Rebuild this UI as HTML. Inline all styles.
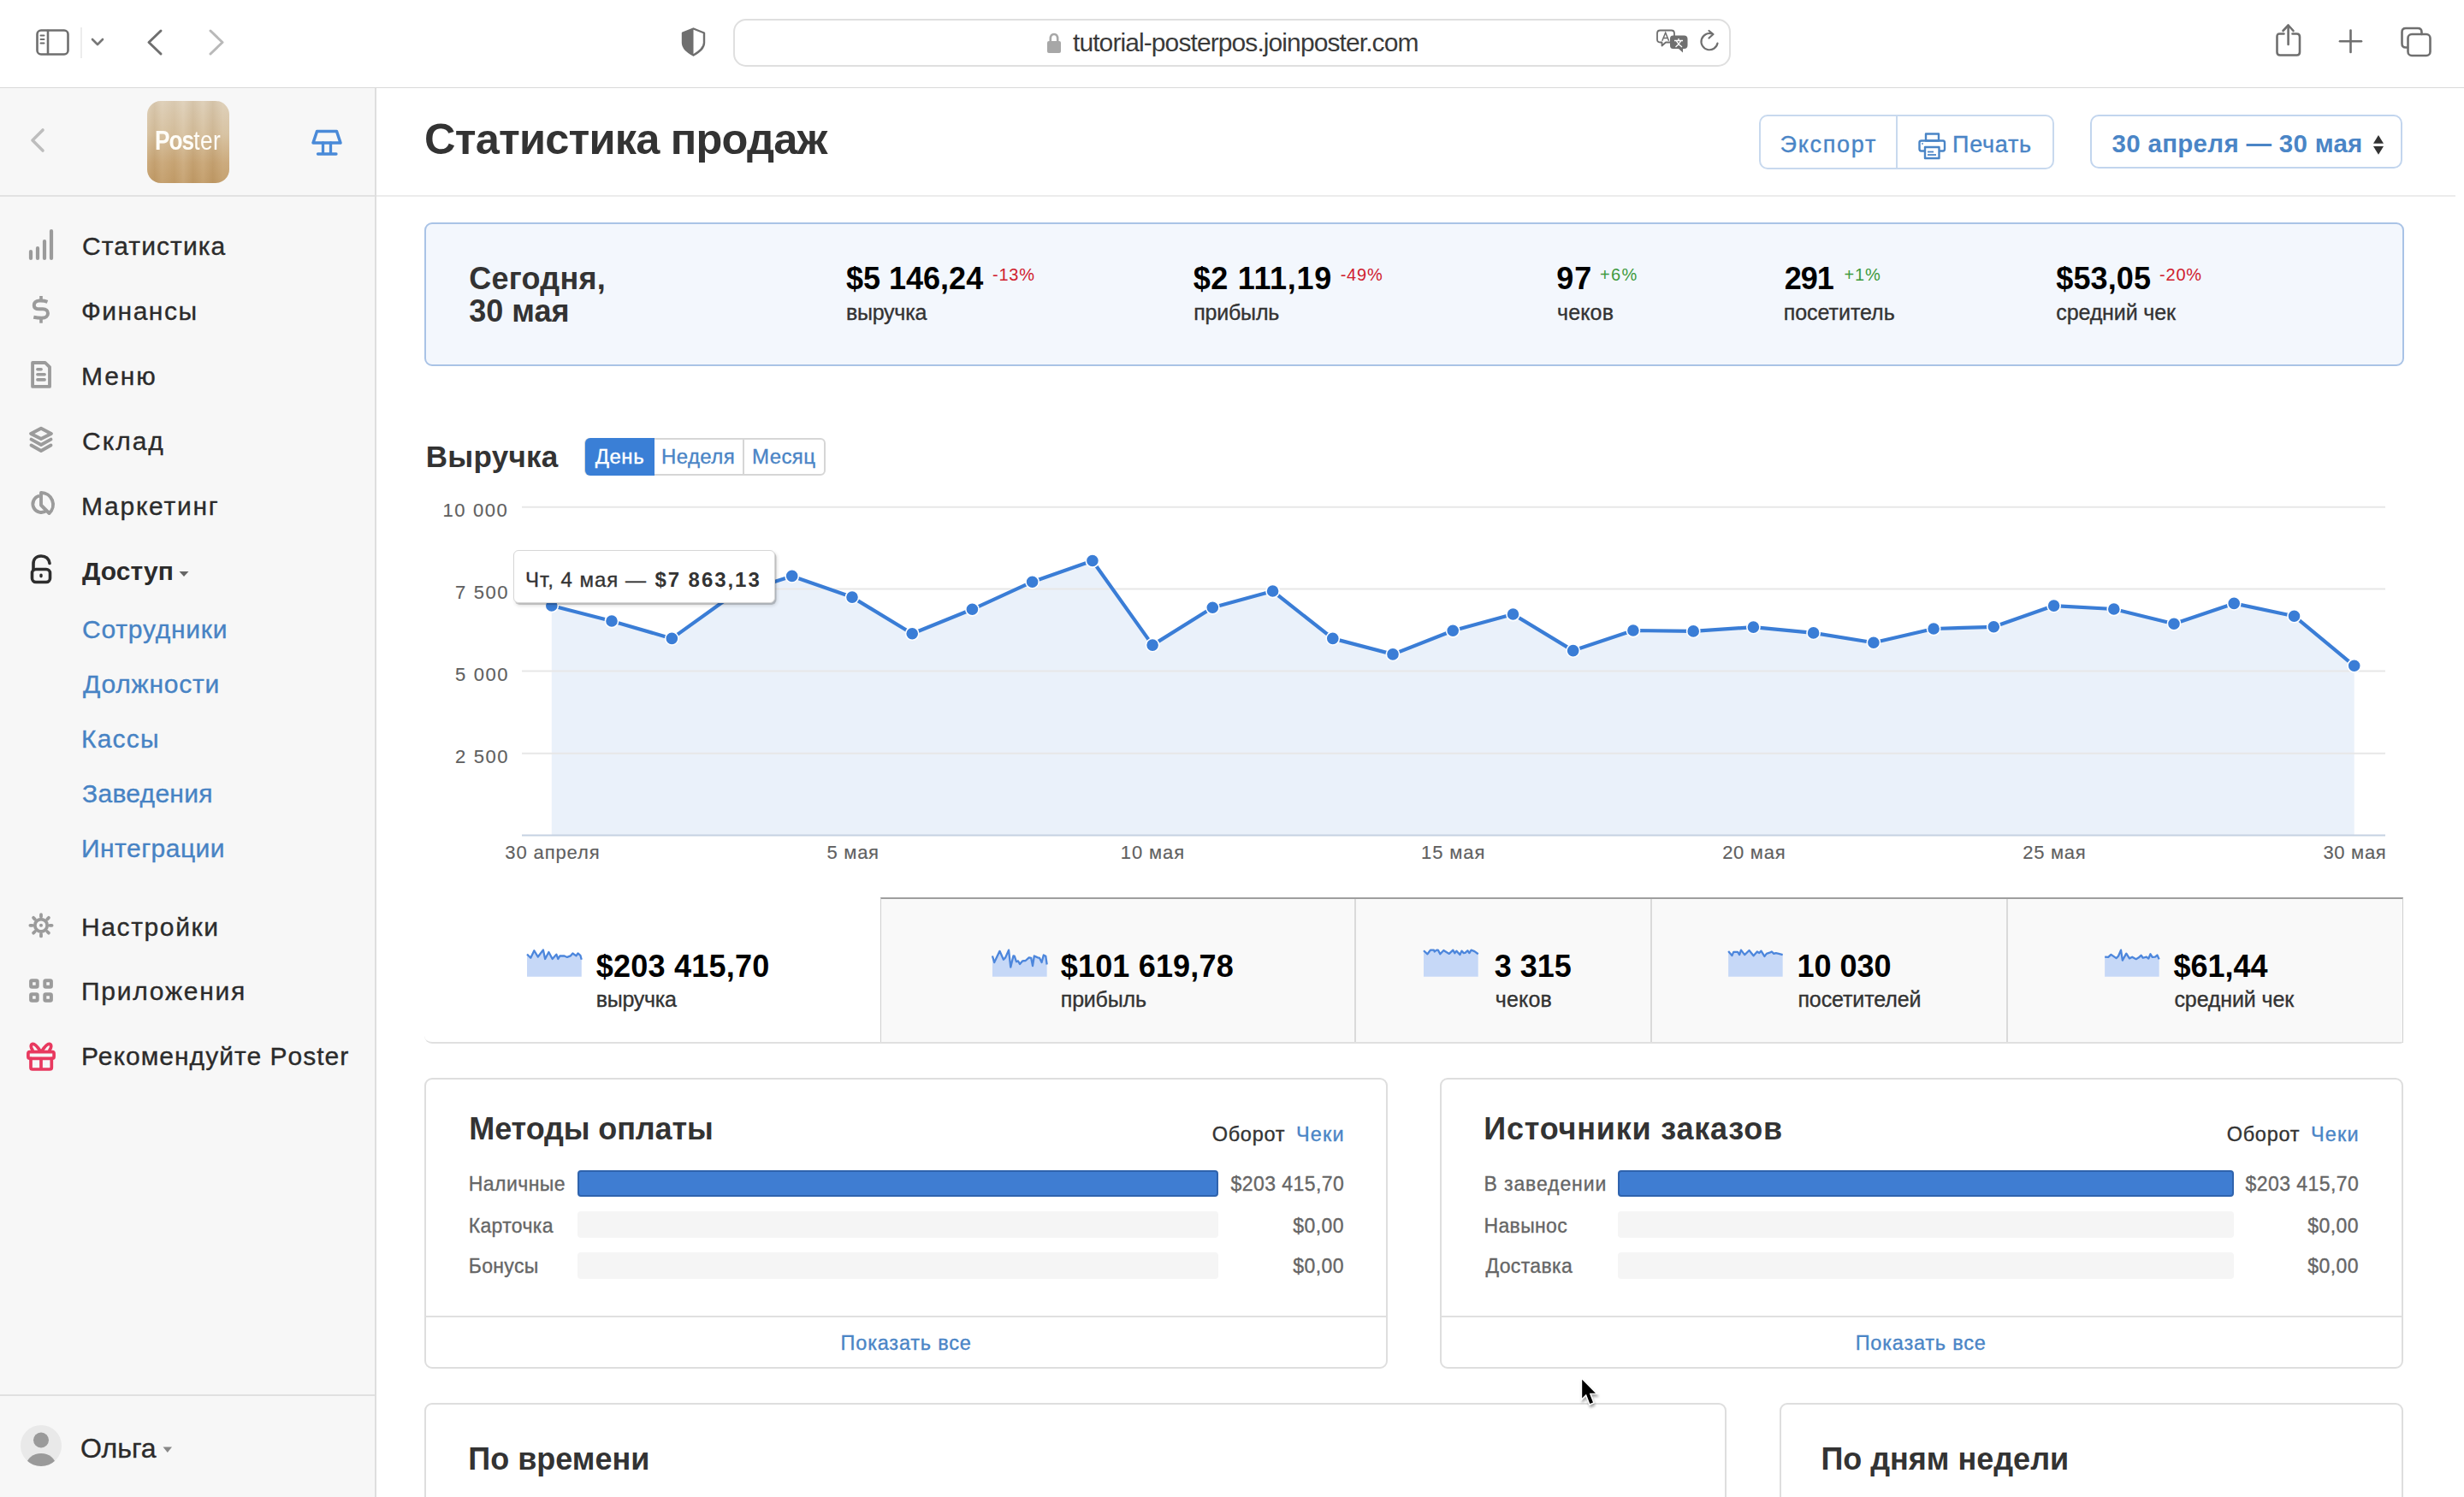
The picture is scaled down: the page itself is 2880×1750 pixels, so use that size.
<!DOCTYPE html>
<html><head><meta charset="utf-8"><title>Статистика продаж</title>
<style>
html,body{margin:0;padding:0;}
body{width:2880px;height:1750px;overflow:hidden;position:relative;background:#fff;font-family:"Liberation Sans",sans-serif;}
.t{position:absolute;line-height:1;white-space:pre;}
.r{-webkit-text-stroke:0.35px currentColor;}
.a{position:absolute;box-sizing:border-box;}
svg{position:absolute;overflow:visible;}
</style></head><body>
<div class='a' style='left:0px;top:0px;width:2880px;height:101px;background:#fff'></div>
<div class='a' style='left:0px;top:101.5px;width:2880px;height:1.5px;background:#d9d9d9'></div>
<div class='a' style='left:0px;top:103px;width:438px;height:1647px;background:#f7f7f7'></div>
<div class='a' style='left:438px;top:103px;width:2px;height:1647px;background:#dedede'></div>
<div class='a' style='left:0px;top:228px;width:438px;height:2px;background:#e2e2e2'></div>
<div class='a' style='left:440px;top:228px;width:2430px;height:2px;background:#ececec'></div>
<div class='a' style='left:0px;top:1630px;width:438px;height:2px;background:#e0e0e0'></div>
<div class='a' style='left:857px;top:22px;width:1166px;height:56px;border:2px solid #dfdfdf;border-radius:15px;background:#fff'></div>

<svg style='left:0;top:0' width='2880' height='103'>
 <g fill='none' stroke='#6f6f6f' stroke-width='2.6' stroke-linecap='round' stroke-linejoin='round'>
  <rect x='43.5' y='35.5' width='36' height='28' rx='4.5'/>
  <line x1='56' y1='36' x2='56' y2='63'/>
  <line x1='47.5' y1='41.5' x2='51.5' y2='41.5' stroke-width='2'/>
  <line x1='47.5' y1='46' x2='51.5' y2='46' stroke-width='2'/>
  <line x1='47.5' y1='50.5' x2='51.5' y2='50.5' stroke-width='2'/>
  <polyline points='108,46 114,52 120,46' stroke='#777'/>
  <polyline points='188,36 174,49.5 188,63' stroke-width='3'/>
  <polyline points='246,36 260,49.5 246,63' stroke='#b9b9b9' stroke-width='3'/>
 </g>
 <line x1='95' y1='32' x2='95' y2='68' stroke='#e6e6e6' stroke-width='1.5'/>
 <!-- shield -->
 <path d='M810.5,33.5 L823,38.5 L823,50 C823,56 818,60 810.5,64.5 C803,60 798,56 798,50 L798,38.5 Z' fill='none' stroke='#6f6f6f' stroke-width='2.4' stroke-linejoin='round'/>
 <path d='M810.5,33.5 L798,38.5 L798,50 C798,56 803,60 810.5,64.5 Z' fill='#6f6f6f'/>
 <!-- lock -->
 <path d='M1227.8,48 L1227.8,45.5 C1227.8,41.5 1229.8,40 1232,40 C1234.2,40 1236.2,41.5 1236.2,45.5 L1236.2,48' fill='none' stroke='#a7a7a7' stroke-width='2.6'/>
 <rect x='1224' y='48' width='16' height='14' rx='2' fill='#a7a7a7'/>
 <!-- translate -->
 <path d='M1940.5,35.5 L1953.5,35.5 C1955.5,35.5 1957,37 1957,39 L1957,46 C1957,48 1955.5,49.5 1953.5,49.5 L1947,49.5 L1942.5,53.5 L1942.5,49.5 L1940.5,49.5 C1938.5,49.5 1937,48 1937,46 L1937,39 C1937,37 1938.5,35.5 1940.5,35.5 Z' fill='#fff' stroke='#6f6f6f' stroke-width='1.8' stroke-linejoin='round'/>
 <path d='M1942.8,47.8 L1946.7,38.2 L1950.6,47.8 M1944.2,44.6 L1949.2,44.6' fill='none' stroke='#6f6f6f' stroke-width='1.5'/>
 <path d='M1955.5,41.5 L1968.5,41.5 C1971,41.5 1972.5,43 1972.5,45.5 L1972.5,53 C1972.5,55.5 1971,57 1968.5,57 L1967,57 L1967,61.5 L1962,57 L1955.5,57 C1953,57 1952,55.5 1952,53 L1952,45.5 C1952,43 1953,41.5 1955.5,41.5 Z' fill='#6f6f6f'/>
 <path d='M1957,47.5 L1967,47.5 M1962,45 L1962,47.5 M1958.5,55 C1961,53 1963,51 1964.5,48 M1959.5,48 C1961,51 1963,53 1966,55' fill='none' stroke='#fff' stroke-width='1.4'/>
 <!-- reload -->
 <path d='M2007.5,50.5 A9.6,9.6 0 1 1 2001,39.5' fill='none' stroke='#6f6f6f' stroke-width='2.2' stroke-linecap='round'/>
 <polyline points='1997.5,36 2002.5,40 1997.5,44.5' fill='none' stroke='#6f6f6f' stroke-width='2.2' stroke-linecap='round' stroke-linejoin='round'/>
 <!-- share -->
 <g fill='none' stroke='#6f6f6f' stroke-width='2.6' stroke-linecap='round' stroke-linejoin='round'>
  <path d='M2669.5,39.5 L2664.5,39.5 C2662,39.5 2661.5,40.5 2661.5,43 L2661.5,61 C2661.5,63.5 2662.5,64.5 2665,64.5 L2684.5,64.5 C2687,64.5 2688,63.5 2688,61 L2688,43 C2688,40.5 2687,39.5 2684.5,39.5 L2679.5,39.5'/>
  <line x1='2674.6' y1='30' x2='2674.6' y2='52'/>
  <polyline points='2668.5,36 2674.6,29.5 2680.5,36'/>
  <line x1='2747.5' y1='35.5' x2='2747.5' y2='61'/>
  <line x1='2735' y1='48.3' x2='2760' y2='48.3'/>
  <path d='M2814,55.5 L2812,55.5 C2809,55.5 2807.5,54 2807.5,51 L2807.5,37.5 C2807.5,34.5 2809,33 2812,33 L2826,33 C2829,33 2830.5,34.5 2830.5,37.5 L2830.5,40'/>
  <rect x='2814.5' y='40' width='26' height='25' rx='4.5'/>
 </g>
</svg>


<svg style='left:0;top:103px' width='440' height='1650'>
 <polyline points='50,49 38,61 50,73' fill='none' stroke='#bdbdbd' stroke-width='3.6' stroke-linecap='round' stroke-linejoin='round'/>
 <!-- lamp -->
 <g fill='none' stroke='#4a8ad8' stroke-width='3.3' stroke-linejoin='round' stroke-linecap='round'>
  <path d='M370.5,50.5 L393.5,50.5 L398,64 L366,64 Z' stroke-width='3.5'/>
  <line x1='377.5' y1='64' x2='377.5' y2='76'/>
  <line x1='386.5' y1='64' x2='386.5' y2='76'/>
  <line x1='371.5' y1='77' x2='393' y2='77'/>
 </g>
</svg>


<div class='a' style='left:172px;top:118px;width:96px;height:96px;border-radius:16px;overflow:hidden;background:linear-gradient(180deg,#ddceb6 0%,#d6c09e 40%,#c9a676 75%,#c29c68 100%)'>
 <div style='position:absolute;inset:0;background:linear-gradient(90deg,rgba(255,255,255,0.05) 0%,rgba(120,80,30,0.07) 9%,rgba(255,255,255,0.06) 18%,rgba(120,80,30,0.04) 33%,rgba(255,255,255,0.09) 44%,rgba(120,80,30,0.08) 56%,rgba(255,255,255,0.05) 68%,rgba(120,80,30,0.09) 80%,rgba(255,255,255,0.06) 92%)'></div>
 <div style='position:absolute;left:8.8px;top:30px;font-family:"Liberation Sans";font-size:32px;line-height:1;color:#fffdf8;white-space:pre;transform:scaleX(0.82);transform-origin:0 0'><span style='font-weight:700;letter-spacing:-1.2px'>Pos</span><span style='font-weight:400;letter-spacing:0.6px'>ter</span></div>
</div>


<svg style='left:0;top:0' width='440' height='1750'>
 <!-- stats bars -->
 <g stroke='#9b9b9b' stroke-width='4.2' stroke-linecap='round'>
  <line x1='36' y1='294' x2='36' y2='302'/>
  <line x1='44' y1='290' x2='44' y2='302'/>
  <line x1='52' y1='282' x2='52' y2='302'/>
  <line x1='60' y1='270' x2='60' y2='302'/>
 </g>
 <!-- dollar -->
 <path d='M55.5,352.8 C52,351.5 49,351.3 46,351.5 C41.5,351.8 39.8,354 39.8,357 C39.8,360 42,361.3 46,361.3 L50,361.3 C54,361.3 56,363.5 56,366.3 C56,369.5 53.5,371.8 49,371.8 C45.5,371.8 42.5,371.5 39.3,370.8' fill='none' stroke='#9b9b9b' stroke-width='4'/>
 <rect x='46.2' y='346' width='3.6' height='6' fill='#9b9b9b'/>
 <rect x='46.2' y='371' width='3.6' height='6.7' fill='#9b9b9b'/>
 <!-- menu doc -->
 <path d='M38.1,424 L52.8,424 L58,429.2 L58,451.9 L38.1,451.9 Z' fill='none' stroke='#9b9b9b' stroke-width='3.85' stroke-linejoin='round'/>
 <g stroke='#9b9b9b' stroke-width='3.6' stroke-linecap='round'><line x1='43.9' y1='431.7' x2='48.1' y2='431.7'/><line x1='43.9' y1='437.8' x2='52.1' y2='437.8'/><line x1='43.9' y1='443.9' x2='52.1' y2='443.9'/></g>
 <!-- layers -->
 <g fill='none' stroke='#9b9b9b' stroke-width='3.9' stroke-linejoin='round' stroke-linecap='round'>
  <path d='M48,500.7 L59.9,506.9 L48,513 L36.1,506.9 Z'/>
  <polyline points='36.5,513.6 48,520 59.5,513.6'/>
  <polyline points='36.5,520.5 48,527 59.5,520.5'/>
 </g>
 <!-- pie -->
 <g fill='none' stroke='#9b9b9b' stroke-width='3.9' stroke-linejoin='round'>
  <path d='M46,579.6 A9.8,9.8 0 1 0 54.9,596.3'/>
  <path d='M48,576 L48,590.5 L57.5,600 A13.8,13.8 0 0 0 48,576 Z'/>
 </g>
 <!-- open lock -->
 <g fill='none' stroke='#2e2e2e' stroke-width='3.6' stroke-linecap='round'>
  <path d='M58,658.5 C57,652.5 53.5,650 48,650 C42.5,650 39,653.5 39,659 L39,666'/>
  <rect x='37.5' y='665.5' width='21' height='15' rx='4.5'/>
 </g>
 <ellipse cx='48' cy='673' rx='1.8' ry='2.4' fill='#2e2e2e'/>
 <!-- gear -->
 <g stroke='#9b9b9b' stroke-width='3.8' stroke-linecap='round' fill='none'>
  <line x1='48.00' y1='1071.60' x2='48.00' y2='1069.20'/><line x1='55.21' y1='1074.59' x2='56.91' y2='1072.89'/><line x1='58.20' y1='1081.80' x2='60.60' y2='1081.80'/><line x1='55.21' y1='1089.01' x2='56.91' y2='1090.71'/><line x1='48.00' y1='1092.00' x2='48.00' y2='1094.40'/><line x1='40.79' y1='1089.01' x2='39.09' y2='1090.71'/><line x1='37.80' y1='1081.80' x2='35.40' y2='1081.80'/><line x1='40.79' y1='1074.59' x2='39.09' y2='1072.89'/>
  <circle cx='48' cy='1081.8' r='7.2'/>
 </g>
 <circle cx='48' cy='1081.8' r='2' fill='#9b9b9b'/>
 <!-- apps -->
 <g fill='none' stroke='#9b9b9b' stroke-width='4'>
  <rect x='36.1' y='1146.2' width='7.6' height='7.6' rx='1.2'/>
  <rect x='52.3' y='1146.2' width='7.6' height='7.6' rx='1.2'/>
  <rect x='36.1' y='1162.2' width='7.6' height='7.6' rx='1.2'/>
  <rect x='52.3' y='1162.2' width='7.6' height='7.6' rx='1.2'/>
 </g>
 <!-- gift -->
 <g fill='none' stroke='#e8395f' stroke-width='3.7' stroke-linejoin='round' stroke-linecap='round'>
  <rect x='32.9' y='1229.7' width='30.2' height='7.6' rx='2'/>
  <path d='M36,1237.3 L36,1248 C36,1249.2 36.8,1250 38,1250 L58,1250 C59.2,1250 60.3,1249.2 60.3,1248 L60.3,1237.3'/>
  <line x1='48' y1='1237.5' x2='48' y2='1249'/>
  <path d='M47,1228.5 C44,1224 40.5,1219.5 37.8,1220.5 C35.5,1221.5 36,1225 38,1227.5'/>
  <path d='M49,1228.5 C52,1224 55.5,1219.5 58.2,1220.5 C60.5,1221.5 60,1225 58,1227.5'/>
 </g>
 <!-- avatar -->
 <circle cx='48' cy='1690' r='24' fill='#e9e9e9'/>
 <clipPath id='avc'><circle cx='48' cy='1690' r='24'/></clipPath>
 <g clip-path='url(#avc)' fill='#9a9a9a'>
  <circle cx='48' cy='1683.5' r='9'/>
  <ellipse cx='48' cy='1713' rx='17' ry='14'/>
 </g>
 <!-- carets -->
 <polygon points='209.5,668 220.5,668 215,674' fill='#666'/>
 <polygon points='190.5,1691.5 201,1691.5 195.8,1698' fill='#888'/>
</svg>

<div class='a' style='left:2056px;top:134px;width:345px;height:64px;border:2px solid #c8d9ee;border-radius:10px;background:#fff'></div>
<div class='a' style='left:2216px;top:135px;width:2px;height:62px;background:#c8d9ee'></div>
<div class='a' style='left:2443px;top:134px;width:365px;height:63px;border:2px solid #c2d5ee;border-radius:10px;background:#fff'></div>

<svg style='left:0;top:0' width='2880' height='240'>
 <g fill='none' stroke='#4a85c6' stroke-width='2.4' stroke-linejoin='round'>
  <rect x='2251' y='156.5' width='15' height='8'/>
  <path d='M2250,176.5 L2245.5,176.5 C2244,176.5 2243.5,175.5 2243.5,174 L2243.5,166.5 C2243.5,165 2244.5,164.5 2246,164.5 L2271,164.5 C2272.5,164.5 2273,165.5 2273,167 L2273,174 C2273,175.5 2272.5,176.5 2271,176.5 L2266.5,176.5'/>
  <rect x='2250' y='172' width='16.5' height='13'/>
 </g>
 <line x1='2253' y1='177.5' x2='2260' y2='177.5' stroke='#4a85c6' stroke-width='1.8'/>
 <line x1='2253' y1='181' x2='2263' y2='181' stroke='#4a85c6' stroke-width='1.8'/>
 <circle cx='2247' cy='168' r='0.9' fill='#4a85c6'/>
 <polygon points='2774,167.8 2786,167.8 2780,158' fill='#333'/>
 <polygon points='2774,171 2786,171 2780,180.8' fill='#333'/>
</svg>
<div class='a' style='left:496px;top:260px;width:2314px;height:168px;border:2px solid #a9c3e6;border-radius:9px;background:#f3f7fd'></div>

<svg style='left:0;top:0' width='2880' height='1000'>
 <path d='M644.8,976 L644.8,708.0 L715.0,726.0 L785.3,746.4 L855.5,696.0 L925.7,673.4 L996.0,698.1 L1066.2,740.7 L1136.4,712.3 L1206.6,680.2 L1276.9,655.5 L1347.1,754.1 L1417.3,710.3 L1487.6,691.0 L1557.8,746.4 L1628.0,764.9 L1698.2,737.3 L1768.5,718.0 L1838.7,760.6 L1908.9,737.0 L1979.2,737.9 L2049.4,733.1 L2119.6,739.9 L2189.9,751.2 L2260.1,735.0 L2330.3,732.8 L2400.6,708.1 L2470.8,712.0 L2541.0,729.2 L2611.2,705.4 L2681.5,720.2 L2751.7,778.3 L2751.7,976 Z' fill='#eaf1fa'/>
 <line x1='610' y1='592.8' x2='2788' y2='592.8' stroke='#e7e7e7' stroke-width='2'/><line x1='610' y1='688.6' x2='2788' y2='688.6' stroke='#e7e7e7' stroke-width='2'/><line x1='610' y1='784.5' x2='2788' y2='784.5' stroke='#e7e7e7' stroke-width='2'/><line x1='610' y1='880.7' x2='2788' y2='880.7' stroke='#e7e7e7' stroke-width='2'/>
 <line x1='610' y1='976.5' x2='2788' y2='976.5' stroke='#c5d2e2' stroke-width='2'/>
 <polyline points='644.8,708.0 715.0,726.0 785.3,746.4 855.5,696.0 925.7,673.4 996.0,698.1 1066.2,740.7 1136.4,712.3 1206.6,680.2 1276.9,655.5 1347.1,754.1 1417.3,710.3 1487.6,691.0 1557.8,746.4 1628.0,764.9 1698.2,737.3 1768.5,718.0 1838.7,760.6 1908.9,737.0 1979.2,737.9 2049.4,733.1 2119.6,739.9 2189.9,751.2 2260.1,735.0 2330.3,732.8 2400.6,708.1 2470.8,712.0 2541.0,729.2 2611.2,705.4 2681.5,720.2 2751.7,778.3' fill='none' stroke='#3a7dd6' stroke-width='4.2' stroke-linejoin='round'/>
 <circle cx='644.8' cy='708.0' r='7.6' fill='#3a7dd6' stroke='#fff' stroke-width='1.6'/><circle cx='715.0' cy='726.0' r='7.6' fill='#3a7dd6' stroke='#fff' stroke-width='1.6'/><circle cx='785.3' cy='746.4' r='7.6' fill='#3a7dd6' stroke='#fff' stroke-width='1.6'/><circle cx='855.5' cy='696.0' r='7.6' fill='#3a7dd6' stroke='#fff' stroke-width='1.6'/><circle cx='925.7' cy='673.4' r='7.6' fill='#3a7dd6' stroke='#fff' stroke-width='1.6'/><circle cx='996.0' cy='698.1' r='7.6' fill='#3a7dd6' stroke='#fff' stroke-width='1.6'/><circle cx='1066.2' cy='740.7' r='7.6' fill='#3a7dd6' stroke='#fff' stroke-width='1.6'/><circle cx='1136.4' cy='712.3' r='7.6' fill='#3a7dd6' stroke='#fff' stroke-width='1.6'/><circle cx='1206.6' cy='680.2' r='7.6' fill='#3a7dd6' stroke='#fff' stroke-width='1.6'/><circle cx='1276.9' cy='655.5' r='7.6' fill='#3a7dd6' stroke='#fff' stroke-width='1.6'/><circle cx='1347.1' cy='754.1' r='7.6' fill='#3a7dd6' stroke='#fff' stroke-width='1.6'/><circle cx='1417.3' cy='710.3' r='7.6' fill='#3a7dd6' stroke='#fff' stroke-width='1.6'/><circle cx='1487.6' cy='691.0' r='7.6' fill='#3a7dd6' stroke='#fff' stroke-width='1.6'/><circle cx='1557.8' cy='746.4' r='7.6' fill='#3a7dd6' stroke='#fff' stroke-width='1.6'/><circle cx='1628.0' cy='764.9' r='7.6' fill='#3a7dd6' stroke='#fff' stroke-width='1.6'/><circle cx='1698.2' cy='737.3' r='7.6' fill='#3a7dd6' stroke='#fff' stroke-width='1.6'/><circle cx='1768.5' cy='718.0' r='7.6' fill='#3a7dd6' stroke='#fff' stroke-width='1.6'/><circle cx='1838.7' cy='760.6' r='7.6' fill='#3a7dd6' stroke='#fff' stroke-width='1.6'/><circle cx='1908.9' cy='737.0' r='7.6' fill='#3a7dd6' stroke='#fff' stroke-width='1.6'/><circle cx='1979.2' cy='737.9' r='7.6' fill='#3a7dd6' stroke='#fff' stroke-width='1.6'/><circle cx='2049.4' cy='733.1' r='7.6' fill='#3a7dd6' stroke='#fff' stroke-width='1.6'/><circle cx='2119.6' cy='739.9' r='7.6' fill='#3a7dd6' stroke='#fff' stroke-width='1.6'/><circle cx='2189.9' cy='751.2' r='7.6' fill='#3a7dd6' stroke='#fff' stroke-width='1.6'/><circle cx='2260.1' cy='735.0' r='7.6' fill='#3a7dd6' stroke='#fff' stroke-width='1.6'/><circle cx='2330.3' cy='732.8' r='7.6' fill='#3a7dd6' stroke='#fff' stroke-width='1.6'/><circle cx='2400.6' cy='708.1' r='7.6' fill='#3a7dd6' stroke='#fff' stroke-width='1.6'/><circle cx='2470.8' cy='712.0' r='7.6' fill='#3a7dd6' stroke='#fff' stroke-width='1.6'/><circle cx='2541.0' cy='729.2' r='7.6' fill='#3a7dd6' stroke='#fff' stroke-width='1.6'/><circle cx='2611.2' cy='705.4' r='7.6' fill='#3a7dd6' stroke='#fff' stroke-width='1.6'/><circle cx='2681.5' cy='720.2' r='7.6' fill='#3a7dd6' stroke='#fff' stroke-width='1.6'/><circle cx='2751.7' cy='778.3' r='7.6' fill='#3a7dd6' stroke='#fff' stroke-width='1.6'/>
</svg>

<div class='a' style='left:683px;top:512px;width:282px;height:44px;border:2px solid #d6d6d6;border-radius:6px;background:#fff'></div>
<div class='a' style='left:684px;top:512px;width:81px;height:44px;background:#3a7fd6;border-radius:6px 0 0 6px'></div>
<div class='a' style='left:868px;top:514px;width:2px;height:40px;background:#d6d6d6'></div>
<div class='a' style='left:600px;top:643px;width:306px;height:62px;background:#fff;border:1.5px solid #d6d6d6;border-radius:6px;box-shadow:1.5px 2px 0 rgba(0,0,0,0.16),2px 3px 4px rgba(0,0,0,0.14)'></div>
<div class='a' style='left:1029px;top:1049px;width:1780px;height:170px;background:#f9f9f9;border-top:2px solid #9e9e9e;border-left:1.5px solid #d0d0d0;border-right:1.5px solid #d0d0d0'></div>
<div class='a' style='left:1583px;top:1051px;width:2px;height:168px;background:#dadada'></div>
<div class='a' style='left:1929px;top:1051px;width:2px;height:168px;background:#dadada'></div>
<div class='a' style='left:2345px;top:1051px;width:2px;height:168px;background:#dadada'></div>
<div class='a' style='left:496px;top:1200px;width:2313px;height:20px;border-bottom:2px solid #e0e0e0;border-bottom-left-radius:9px;border-bottom-right-radius:4px'></div>
<svg style='left:0;top:0' width='2880' height='1250'><path d='M616.03,1141.8 L616.03,1115.50 L620.29,1119.76 L624.35,1111.23 L628.81,1118.54 L634.90,1110.42 L637.13,1120.97 L641.40,1113.06 L645.66,1120.97 L650.32,1115.70 L652.35,1120.97 L654.38,1117.52 L659.66,1117.52 L662.91,1118.94 L666.96,1117.32 L669.40,1114.48 L673.46,1117.32 L675.49,1114.48 L678.33,1116.92 L679.75,1121.79 L679.75,1141.8 Z' fill='#c6d8f7'/><path d='M616.03,1115.50 L620.29,1119.76 L624.35,1111.23 L628.81,1118.54 L634.90,1110.42 L637.13,1120.97 L641.40,1113.06 L645.66,1120.97 L650.32,1115.70 L652.35,1120.97 L654.38,1117.52 L659.66,1117.52 L662.91,1118.94 L666.96,1117.32 L669.40,1114.48 L673.46,1117.32 L675.49,1114.48 L678.33,1116.92 L679.75,1121.79' fill='none' stroke='#4c86dc' stroke-width='2.3' stroke-linejoin='round'/><path d='M1159.94,1141.8 L1159.94,1117.52 L1162.18,1125.03 L1168.47,1111.84 L1172.93,1121.79 L1175.16,1119.35 L1179.02,1110.62 L1181.25,1130.71 L1184.50,1117.32 L1185.71,1117.52 L1187.95,1124.22 L1189.98,1123.41 L1192.00,1127.06 L1195.05,1123.41 L1198.70,1123.00 L1202.76,1119.35 L1205.19,1119.76 L1207.02,1129.09 L1208.85,1117.52 L1212.91,1119.35 L1214.94,1119.76 L1217.57,1125.03 L1219.81,1116.51 L1222.24,1117.73 L1223.66,1127.47 L1223.66,1141.8 Z' fill='#c6d8f7'/><path d='M1159.94,1117.52 L1162.18,1125.03 L1168.47,1111.84 L1172.93,1121.79 L1175.16,1119.35 L1179.02,1110.62 L1181.25,1130.71 L1184.50,1117.32 L1185.71,1117.52 L1187.95,1124.22 L1189.98,1123.41 L1192.00,1127.06 L1195.05,1123.41 L1198.70,1123.00 L1202.76,1119.35 L1205.19,1119.76 L1207.02,1129.09 L1208.85,1117.52 L1212.91,1119.35 L1214.94,1119.76 L1217.57,1125.03 L1219.81,1116.51 L1222.24,1117.73 L1223.66,1127.47' fill='none' stroke='#4c86dc' stroke-width='2.3' stroke-linejoin='round'/><path d='M1664.00,1141.8 L1664.00,1111.23 L1668.47,1115.29 L1671.92,1110.62 L1675.97,1110.62 L1676.79,1112.45 L1679.22,1110.62 L1680.84,1110.62 L1683.28,1115.29 L1687.34,1111.03 L1693.83,1114.89 L1698.30,1110.62 L1700.32,1114.28 L1702.35,1111.64 L1706.41,1116.10 L1708.44,1111.64 L1710.88,1114.07 L1712.50,1113.87 L1715.34,1111.23 L1717.37,1114.07 L1719.60,1110.62 L1723.46,1112.05 L1727.72,1115.29 L1727.72,1141.8 Z' fill='#c6d8f7'/><path d='M1664.00,1111.23 L1668.47,1115.29 L1671.92,1110.62 L1675.97,1110.62 L1676.79,1112.45 L1679.22,1110.62 L1680.84,1110.62 L1683.28,1115.29 L1687.34,1111.03 L1693.83,1114.89 L1698.30,1110.62 L1700.32,1114.28 L1702.35,1111.64 L1706.41,1116.10 L1708.44,1111.64 L1710.88,1114.07 L1712.50,1113.87 L1715.34,1111.23 L1717.37,1114.07 L1719.60,1110.62 L1723.46,1112.05 L1727.72,1115.29' fill='none' stroke='#4c86dc' stroke-width='2.3' stroke-linejoin='round'/><path d='M2020.15,1141.8 L2020.15,1112.05 L2024.41,1117.12 L2026.23,1112.86 L2031.10,1112.86 L2033.13,1116.10 L2034.96,1110.62 L2039.22,1116.10 L2044.50,1111.03 L2049.57,1117.32 L2053.83,1112.45 L2056.27,1114.07 L2058.50,1111.64 L2062.35,1117.93 L2064.79,1114.89 L2068.44,1113.67 L2070.88,1112.45 L2073.31,1114.89 L2075.75,1114.07 L2078.99,1114.89 L2083.66,1116.10 L2083.66,1141.8 Z' fill='#c6d8f7'/><path d='M2020.15,1112.05 L2024.41,1117.12 L2026.23,1112.86 L2031.10,1112.86 L2033.13,1116.10 L2034.96,1110.62 L2039.22,1116.10 L2044.50,1111.03 L2049.57,1117.32 L2053.83,1112.45 L2056.27,1114.07 L2058.50,1111.64 L2062.35,1117.93 L2064.79,1114.89 L2068.44,1113.67 L2070.88,1112.45 L2073.31,1114.89 L2075.75,1114.07 L2078.99,1114.89 L2083.66,1116.10' fill='none' stroke='#4c86dc' stroke-width='2.3' stroke-linejoin='round'/><path d='M2460.15,1141.8 L2460.15,1118.54 L2464.20,1118.94 L2467.45,1115.90 L2473.54,1120.16 L2475.97,1117.73 L2479.02,1110.62 L2480.84,1122.60 L2485.31,1114.68 L2488.96,1120.37 L2492.21,1118.74 L2496.67,1121.18 L2499.92,1119.35 L2502.56,1116.71 L2504.79,1119.76 L2508.85,1118.54 L2511.28,1120.57 L2513.51,1115.29 L2515.75,1118.94 L2518.99,1118.54 L2521.43,1116.51 L2523.66,1121.38 L2523.66,1141.8 Z' fill='#c6d8f7'/><path d='M2460.15,1118.54 L2464.20,1118.94 L2467.45,1115.90 L2473.54,1120.16 L2475.97,1117.73 L2479.02,1110.62 L2480.84,1122.60 L2485.31,1114.68 L2488.96,1120.37 L2492.21,1118.74 L2496.67,1121.18 L2499.92,1119.35 L2502.56,1116.71 L2504.79,1119.76 L2508.85,1118.54 L2511.28,1120.57 L2513.51,1115.29 L2515.75,1118.94 L2518.99,1118.54 L2521.43,1116.51 L2523.66,1121.38' fill='none' stroke='#4c86dc' stroke-width='2.3' stroke-linejoin='round'/></svg>
<div class='a' style='left:496px;top:1260px;width:1126px;height:340px;border:2px solid #dedede;border-radius:9px;background:#fff'></div>
<div class='a' style='left:498px;top:1538px;width:1122px;height:2px;background:#e0e0e0'></div>
<div class='a' style='left:675.2px;top:1367.8px;width:748.8px;height:31.0px;background:#3f7dd2;border:2px solid #2f63ad;border-radius:4px'></div>
<div class='a' style='left:675.2px;top:1415.7px;width:748.8px;height:31.0px;background:#f5f5f5;border-radius:4px'></div>
<div class='a' style='left:675.2px;top:1464.2px;width:748.8px;height:31.0px;background:#f5f5f5;border-radius:4px'></div>
<div class='a' style='left:1683px;top:1260px;width:1126px;height:340px;border:2px solid #dedede;border-radius:9px;background:#fff'></div>
<div class='a' style='left:1685px;top:1538px;width:1122px;height:2px;background:#e0e0e0'></div>
<div class='a' style='left:1891.2px;top:1367.8px;width:719.3999999999999px;height:31.0px;background:#3f7dd2;border:2px solid #2f63ad;border-radius:4px'></div>
<div class='a' style='left:1891.2px;top:1415.7px;width:719.3999999999999px;height:31.0px;background:#f5f5f5;border-radius:4px'></div>
<div class='a' style='left:1891.2px;top:1464.2px;width:719.3999999999999px;height:31.0px;background:#f5f5f5;border-radius:4px'></div>
<div class='a' style='left:496px;top:1640px;width:1522px;height:140px;border:2px solid #dedede;border-radius:9px;background:#fff'></div>
<div class='a' style='left:2080px;top:1640px;width:729px;height:140px;border:2px solid #dedede;border-radius:9px;background:#fff'></div>
<div class='t r' style='left:1254.0px;top:35.0px;font-size:30px;font-weight:400;color:#3a3a3a;letter-spacing:-0.91px;-webkit-text-stroke:0'>tutorial-posterpos.joinposter.com</div>
<div class='t r' style='left:96.0px;top:273.0px;font-size:30px;font-weight:400;color:#2b2b2b;letter-spacing:1.08px;'>Статистика</div>
<div class='t r' style='left:95.0px;top:349.0px;font-size:30px;font-weight:400;color:#2b2b2b;letter-spacing:1.50px;'>Финансы</div>
<div class='t r' style='left:95.0px;top:425.0px;font-size:30px;font-weight:400;color:#2b2b2b;letter-spacing:1.87px;'>Меню</div>
<div class='t r' style='left:96.0px;top:501.0px;font-size:30px;font-weight:400;color:#2b2b2b;letter-spacing:2.00px;'>Склад</div>
<div class='t r' style='left:95.0px;top:577.0px;font-size:30px;font-weight:400;color:#2b2b2b;letter-spacing:1.73px;'>Маркетинг</div>
<div class='t' style='left:96.0px;top:653.0px;font-size:30px;font-weight:700;color:#2b2b2b;letter-spacing:0.05px;'>Доступ</div>
<div class='t r' style='left:96.0px;top:721.0px;font-size:30px;font-weight:400;color:#4783c4;letter-spacing:0.78px;'>Сотрудники</div>
<div class='t r' style='left:97.0px;top:785.0px;font-size:30px;font-weight:400;color:#4783c4;letter-spacing:0.79px;'>Должности</div>
<div class='t r' style='left:95.0px;top:849.0px;font-size:30px;font-weight:400;color:#4783c4;letter-spacing:1.20px;'>Кассы</div>
<div class='t r' style='left:96.0px;top:913.0px;font-size:30px;font-weight:400;color:#4783c4;letter-spacing:0.29px;'>Заведения</div>
<div class='t r' style='left:95.0px;top:977.0px;font-size:30px;font-weight:400;color:#4783c4;letter-spacing:0.48px;'>Интеграции</div>
<div class='t r' style='left:95.0px;top:1068.5px;font-size:30px;font-weight:400;color:#2b2b2b;letter-spacing:1.62px;'>Настройки</div>
<div class='t r' style='left:95.0px;top:1144.0px;font-size:30px;font-weight:400;color:#2b2b2b;letter-spacing:1.74px;'>Приложения</div>
<div class='t r' style='left:95.0px;top:1220.0px;font-size:30px;font-weight:400;color:#2b2b2b;letter-spacing:1.03px;'>Рекомендуйте Poster</div>
<div class='t r' style='left:94.0px;top:1677.0px;font-size:32px;font-weight:400;color:#2b2b2b;letter-spacing:0.00px;'>Ольга</div>
<div class='t' style='left:496.0px;top:138.4px;font-size:50.5px;font-weight:700;color:#333;letter-spacing:-0.78px;'>Статистика продаж</div>
<div class='t r' style='left:2080.5px;top:155.6px;font-size:27px;font-weight:400;color:#4a85c6;letter-spacing:1.72px;'>Экспорт</div>
<div class='t r' style='left:2282.0px;top:155.6px;font-size:27px;font-weight:400;color:#4a85c6;letter-spacing:0.72px;'>Печать</div>
<div class='t' style='left:2468.5px;top:153.0px;font-size:29.5px;font-weight:700;color:#4a85c6;letter-spacing:0.31px;'>30 апреля — 30 мая</div>
<div class='t' style='left:548.3px;top:308.0px;font-size:36px;font-weight:700;color:#333;letter-spacing:0.24px;'>Сегодня,</div>
<div class='t' style='left:548.3px;top:346.2px;font-size:36px;font-weight:700;color:#333;letter-spacing:0.00px;'>30 мая</div>
<div class='t' style='left:989.0px;top:308.0px;font-size:36px;font-weight:700;color:#000;letter-spacing:0.00px;'>$5 146,24</div>
<div class='t r' style='left:1160.0px;top:311.0px;font-size:20px;font-weight:400;color:#d0202e;letter-spacing:0.77px;-webkit-text-stroke:0'>-13%</div>
<div class='t r' style='left:989.0px;top:352.6px;font-size:25px;font-weight:400;color:#333;letter-spacing:-0.25px;'>выручка</div>
<div class='t' style='left:1394.7px;top:308.0px;font-size:36px;font-weight:700;color:#000;letter-spacing:0.66px;'>$2 111,19</div>
<div class='t r' style='left:1566.7px;top:311.0px;font-size:20px;font-weight:400;color:#d0202e;letter-spacing:0.77px;-webkit-text-stroke:0'>-49%</div>
<div class='t r' style='left:1395.2px;top:352.6px;font-size:25px;font-weight:400;color:#333;letter-spacing:-0.20px;'>прибыль</div>
<div class='t' style='left:1819.3px;top:308.0px;font-size:36px;font-weight:700;color:#000;letter-spacing:0.90px;'>97</div>
<div class='t r' style='left:1870.0px;top:311.0px;font-size:20px;font-weight:400;color:#3d9a3d;letter-spacing:1.40px;-webkit-text-stroke:0'>+6%</div>
<div class='t r' style='left:1820.0px;top:352.6px;font-size:25px;font-weight:400;color:#333;letter-spacing:0.15px;'>чеков</div>
<div class='t' style='left:2085.7px;top:308.0px;font-size:36px;font-weight:700;color:#000;letter-spacing:-1.00px;'>291</div>
<div class='t r' style='left:2155.4px;top:311.0px;font-size:20px;font-weight:400;color:#3d9a3d;letter-spacing:0.95px;-webkit-text-stroke:0'>+1%</div>
<div class='t r' style='left:2084.7px;top:352.6px;font-size:25px;font-weight:400;color:#333;letter-spacing:-0.03px;'>посетитель</div>
<div class='t' style='left:2403.3px;top:308.0px;font-size:36px;font-weight:700;color:#000;letter-spacing:0.12px;'>$53,05</div>
<div class='t r' style='left:2524.0px;top:311.0px;font-size:20px;font-weight:400;color:#d0202e;letter-spacing:0.80px;-webkit-text-stroke:0'>-20%</div>
<div class='t r' style='left:2403.3px;top:352.6px;font-size:25px;font-weight:400;color:#333;letter-spacing:-0.13px;'>средний чек</div>
<div class='t' style='left:497.8px;top:516.0px;font-size:35px;font-weight:700;color:#333;letter-spacing:0.27px;'>Выручка</div>
<div class='t r' style='left:695.7px;top:522.3px;font-size:24px;font-weight:400;color:#fff;letter-spacing:0.53px;'>День</div>
<div class='t r' style='left:773.0px;top:522.3px;font-size:24px;font-weight:400;color:#4a85c6;letter-spacing:0.40px;'>Неделя</div>
<div class='t r' style='left:879.0px;top:522.3px;font-size:24px;font-weight:400;color:#4a85c6;letter-spacing:0.40px;'>Месяц</div>
<div class='t r' style='left:517.5px;top:585.8px;font-size:22px;font-weight:400;color:#606060;letter-spacing:1.60px;-webkit-text-stroke:0.15px #606060'>10 000</div>
<div class='t r' style='left:532.1px;top:681.6px;font-size:22px;font-weight:400;color:#606060;letter-spacing:1.60px;-webkit-text-stroke:0.15px #606060'>7 500</div>
<div class='t r' style='left:532.1px;top:777.6px;font-size:22px;font-weight:400;color:#606060;letter-spacing:1.60px;-webkit-text-stroke:0.15px #606060'>5 000</div>
<div class='t r' style='left:532.1px;top:873.6px;font-size:22px;font-weight:400;color:#606060;letter-spacing:1.60px;-webkit-text-stroke:0.15px #606060'>2 500</div>
<div class='t r' style='left:590.3px;top:985.6px;font-size:22px;font-weight:400;color:#606060;letter-spacing:0.88px;-webkit-text-stroke:0.15px #606060'>30 апреля</div>
<div class='t r' style='left:966.6px;top:985.6px;font-size:22px;font-weight:400;color:#606060;letter-spacing:0.70px;-webkit-text-stroke:0.15px #606060'>5 мая</div>
<div class='t r' style='left:1309.8px;top:985.6px;font-size:22px;font-weight:400;color:#606060;letter-spacing:0.90px;-webkit-text-stroke:0.15px #606060'>10 мая</div>
<div class='t r' style='left:1661.0px;top:985.6px;font-size:22px;font-weight:400;color:#606060;letter-spacing:0.90px;-webkit-text-stroke:0.15px #606060'>15 мая</div>
<div class='t r' style='left:2013.2px;top:985.6px;font-size:22px;font-weight:400;color:#606060;letter-spacing:0.70px;-webkit-text-stroke:0.15px #606060'>20 мая</div>
<div class='t r' style='left:2364.3px;top:985.6px;font-size:22px;font-weight:400;color:#606060;letter-spacing:0.70px;-webkit-text-stroke:0.15px #606060'>25 мая</div>
<div class='t r' style='left:2715.4px;top:985.6px;font-size:22px;font-weight:400;color:#606060;letter-spacing:0.70px;-webkit-text-stroke:0.15px #606060'>30 мая</div>
<div class='t' style='left:696.7px;top:1112.3px;font-size:36px;font-weight:700;color:#000;letter-spacing:0.23px;'>$203 415,70</div>
<div class='t r' style='left:696.7px;top:1156.4px;font-size:25px;font-weight:400;color:#333;letter-spacing:-0.25px;'>выручка</div>
<div class='t' style='left:1239.8px;top:1112.3px;font-size:36px;font-weight:700;color:#000;letter-spacing:0.17px;'>$101 619,78</div>
<div class='t r' style='left:1239.8px;top:1156.4px;font-size:25px;font-weight:400;color:#333;letter-spacing:-0.20px;'>прибыль</div>
<div class='t' style='left:1746.8px;top:1112.3px;font-size:36px;font-weight:700;color:#000;letter-spacing:0.00px;'>3 315</div>
<div class='t r' style='left:1747.8px;top:1156.4px;font-size:25px;font-weight:400;color:#333;letter-spacing:0.15px;'>чеков</div>
<div class='t' style='left:2100.4px;top:1112.3px;font-size:36px;font-weight:700;color:#000;letter-spacing:0.00px;'>10 030</div>
<div class='t r' style='left:2101.4px;top:1156.4px;font-size:25px;font-weight:400;color:#333;letter-spacing:-0.10px;'>посетителей</div>
<div class='t' style='left:2540.5px;top:1112.3px;font-size:36px;font-weight:700;color:#000;letter-spacing:0.00px;'>$61,44</div>
<div class='t r' style='left:2541.5px;top:1156.4px;font-size:25px;font-weight:400;color:#333;letter-spacing:-0.13px;'>средний чек</div>
<div class='t' style='left:548.3px;top:1302.0px;font-size:36px;font-weight:700;color:#333;letter-spacing:-0.11px;'>Методы оплаты</div>
<div class='t r' style='left:1416.7px;top:1314.6px;font-size:23.5px;font-weight:400;color:#333;letter-spacing:0.72px;'>Оборот</div>
<div class='t r' style='left:1515.0px;top:1314.6px;font-size:23.5px;font-weight:400;color:#4a85c6;letter-spacing:1.13px;'>Чеки</div>
<div class='t r' style='left:547.7px;top:1372.8px;font-size:23px;font-weight:400;color:#666;letter-spacing:0.47px;'>Наличные</div>
<div class='t r' style='left:1438.5px;top:1372.8px;font-size:23px;font-weight:400;color:#666;letter-spacing:0.45px;'>$203 415,70</div>
<div class='t r' style='left:547.7px;top:1421.5px;font-size:23px;font-weight:400;color:#666;letter-spacing:0.35px;'>Карточка</div>
<div class='t r' style='left:1511.2px;top:1421.5px;font-size:23px;font-weight:400;color:#666;letter-spacing:0.45px;'>$0,00</div>
<div class='t r' style='left:547.7px;top:1469.0px;font-size:23px;font-weight:400;color:#666;letter-spacing:0.35px;'>Бонусы</div>
<div class='t r' style='left:1511.2px;top:1469.0px;font-size:23px;font-weight:400;color:#666;letter-spacing:0.45px;'>$0,00</div>
<div class='t r' style='left:982.6px;top:1559.2px;font-size:23.5px;font-weight:400;color:#4a85c6;letter-spacing:0.79px;'>Показать все</div>
<div class='t' style='left:1734.3px;top:1302.0px;font-size:36px;font-weight:700;color:#333;letter-spacing:0.79px;'>Источники заказов</div>
<div class='t r' style='left:2602.7px;top:1314.6px;font-size:23.5px;font-weight:400;color:#333;letter-spacing:0.72px;'>Оборот</div>
<div class='t r' style='left:2701.0px;top:1314.6px;font-size:23.5px;font-weight:400;color:#4a85c6;letter-spacing:1.13px;'>Чеки</div>
<div class='t r' style='left:1734.5px;top:1372.8px;font-size:23px;font-weight:400;color:#666;letter-spacing:0.88px;'>В заведении</div>
<div class='t r' style='left:2624.5px;top:1372.8px;font-size:23px;font-weight:400;color:#666;letter-spacing:0.45px;'>$203 415,70</div>
<div class='t r' style='left:1734.5px;top:1421.5px;font-size:23px;font-weight:400;color:#666;letter-spacing:0.35px;'>Навынос</div>
<div class='t r' style='left:2697.2px;top:1421.5px;font-size:23px;font-weight:400;color:#666;letter-spacing:0.45px;'>$0,00</div>
<div class='t r' style='left:1736.5px;top:1469.0px;font-size:23px;font-weight:400;color:#666;letter-spacing:0.35px;'>Доставка</div>
<div class='t r' style='left:2697.2px;top:1469.0px;font-size:23px;font-weight:400;color:#666;letter-spacing:0.45px;'>$0,00</div>
<div class='t r' style='left:2168.7px;top:1559.2px;font-size:23.5px;font-weight:400;color:#4a85c6;letter-spacing:0.79px;'>Показать все</div>
<div class='t' style='left:547.3px;top:1688.0px;font-size:36px;font-weight:700;color:#333;letter-spacing:0.00px;'>По времени</div>
<div class='t' style='left:2128.4px;top:1688.0px;font-size:36px;font-weight:700;color:#333;letter-spacing:0.00px;'>По дням недели</div>
<div class='t r' style='left:614.1px;top:666.2px;font-size:24px;font-weight:400;color:#333;letter-spacing:0.96px;'>Чт, 4 мая —</div>
<div class='t' style='left:765.4px;top:666.2px;font-size:24px;font-weight:700;color:#333;letter-spacing:1.95px;'>$7 863,13</div>
<svg style='left:0;top:0' width='2880' height='1750'>
<defs><filter id='cs' x='-50%' y='-50%' width='200%' height='200%'><feGaussianBlur in='SourceAlpha' stdDeviation='1.6'/><feOffset dx='1' dy='2.5'/><feComponentTransfer><feFuncA type='linear' slope='0.35'/></feComponentTransfer><feMerge><feMergeNode/><feMergeNode in='SourceGraphic'/></feMerge></filter></defs>
<path filter='url(#cs)' d='M1849.2,1612.8 L1849.2,1634.5 L1854,1629.8 L1858.3,1641 L1862,1639.5 L1857.8,1628.8 L1865,1628.8 Z' fill='#000' stroke='#fff' stroke-width='2.6' stroke-linejoin='miter' paint-order='stroke'/>
</svg>
</body></html>
